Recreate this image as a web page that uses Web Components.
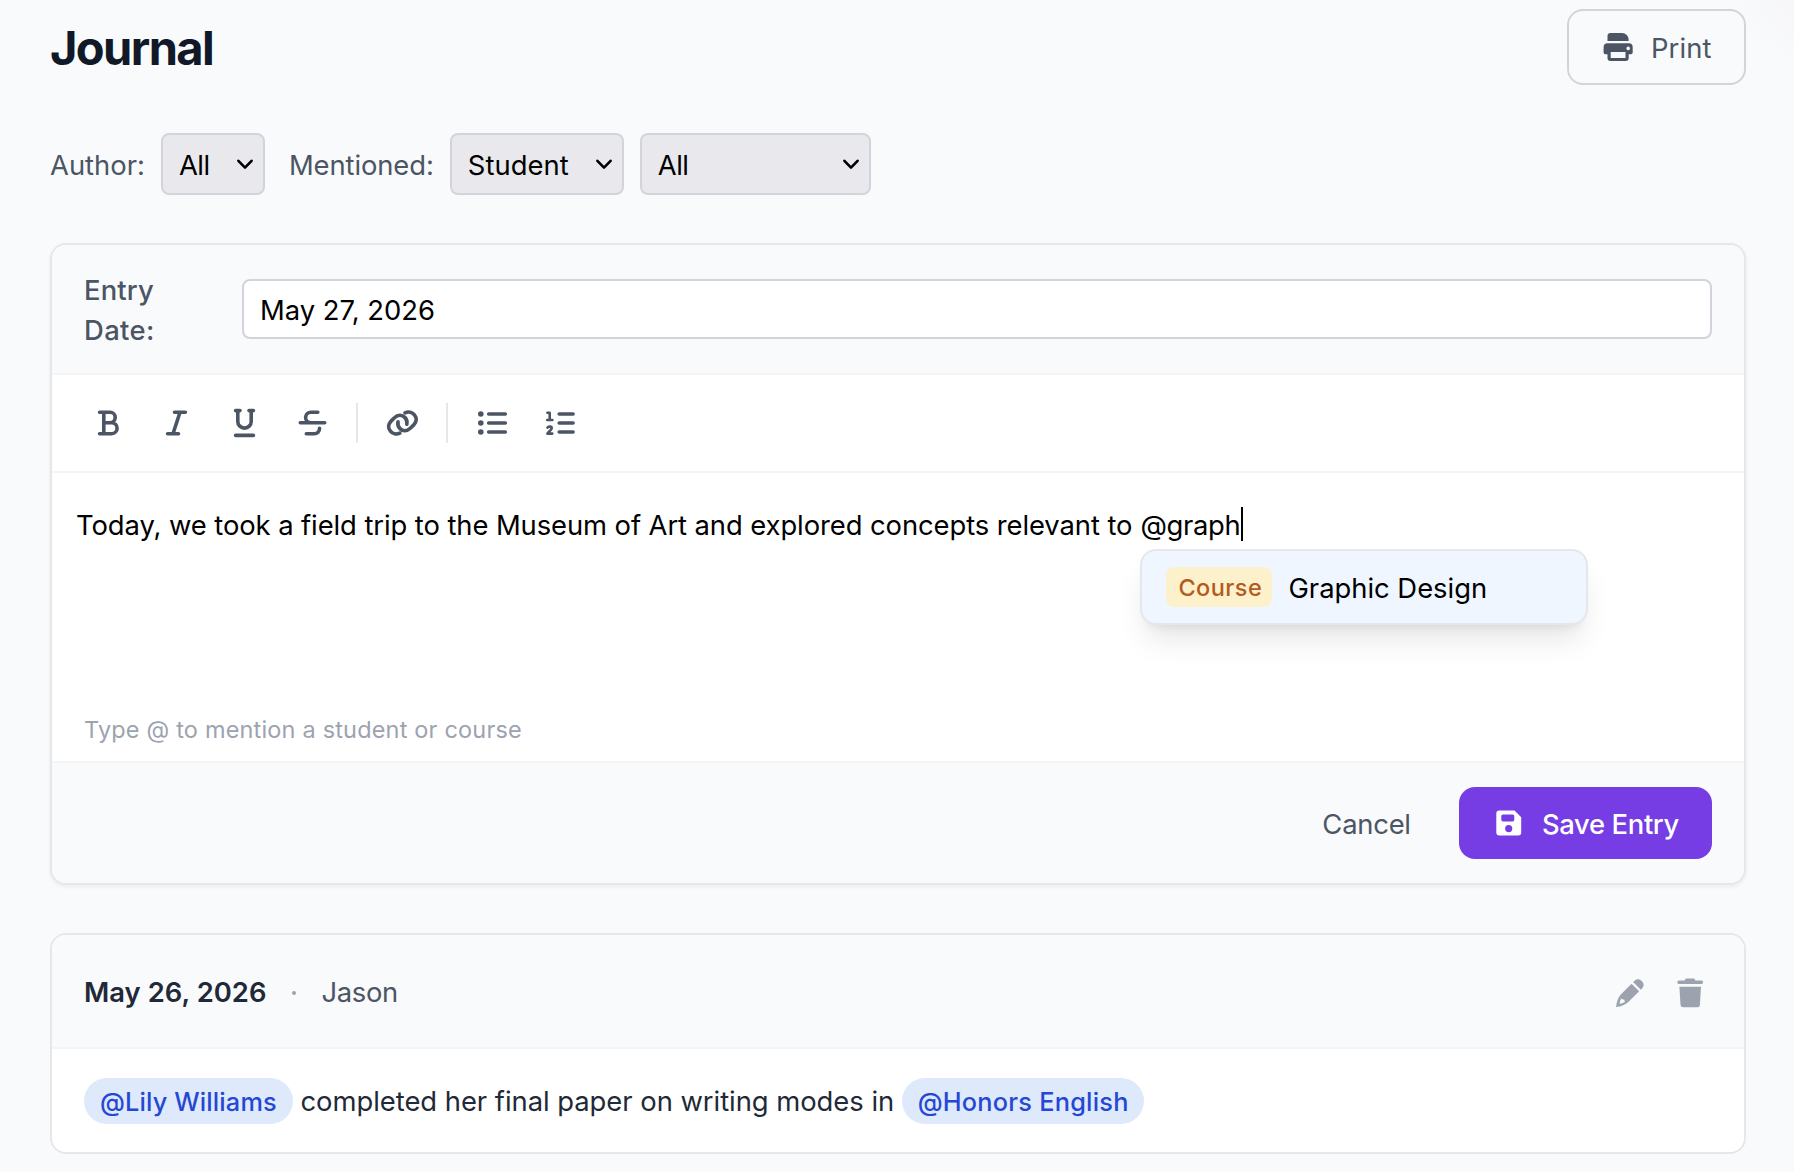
<!DOCTYPE html>
<html lang="en">
<head>
<meta charset="utf-8">
<title>Journal</title>
<style>
    html{
        height: 100%;
    }

    body{
        margin: 0;
        min-height: 100%;
        overflow: hidden;
        background: radial-gradient(circle at 1850px -50px, #f5f5f8 0, #f6f6f9 70px, #f9fafc 130px) #f9fafc;
        font-family: Inter, "Liberation Sans", sans-serif;
        font-size: 27.4px;
        line-height: 40px;
        color: #000;
    }
</style>
</head>
<body>
<journal-page>
    <page-header slot="header">
        <text-run slot="title" width="161">Journal</text-run>
        <action-button kind="outline" icon="print"><text-run width="58.5">Print</text-run></action-button>
    </page-header>

    <filter-bar slot="filters">
        <text-run width="93">Author:</text-run>
        <select-box style="width: 104px"><text-run width="29.5">All</text-run></select-box>
        <text-run width="141" style="margin-left: 8px">Mentioned:</text-run>
        <select-box style="width: 174px"><text-run width="100">Student</text-run></select-box>
        <select-box style="width: 231px"><text-run width="29.5">All</text-run></select-box>
    </filter-bar>

    <entry-card raised>
        <date-field slot="header">
            <text-run slot="label" width="68">Entry</text-run>
            <text-run slot="label" width="67">Date:</text-run>
            <text-run width="172">May 27, 2026</text-run>
        </date-field>
        <format-toolbar></format-toolbar>
        <text-editor>
            <text-run width="1055">Today, we took a field trip to the Museum of Art and explored concepts relevant to</text-run>
            <text-run slot="query" width="98">@graph</text-run>
            <mention-menu slot="menu">
                <text-run slot="type" width="81.5">Course</text-run>
                <text-run width="196.5">Graphic Design</text-run>
            </mention-menu>
            <text-run slot="hint" width="436">Type @ to mention a student or course</text-run>
        </text-editor>
        <card-footer slot="footer">
            <action-button kind="plain"><text-run width="86">Cancel</text-run></action-button>
            <action-button kind="primary" icon="save"><text-run width="136.5">Save Entry</text-run></action-button>
        </card-footer>
    </entry-card>

    <entry-card>
        <entry-meta slot="header">
            <text-run slot="date" width="180.5">May 26, 2026</text-run>
            <text-run slot="author" width="74.5">Jason</text-run>
        </entry-meta>
        <entry-body>
            <mention-pill style="width: 209px"><text-run width="175">@Lily Williams</text-run></mention-pill>
            <text-run width="591.5">completed her final paper on writing modes in</text-run>
            <mention-pill style="width: 242px"><text-run width="208.5">@Honors English</text-run></mention-pill>
        </entry-body>
    </entry-card>
</journal-page>

<script>
const icons = {
    bold: `<g class="line"><path d="M7.6 5.3H18a5.2 5.2 0 0 1 0 10.4h-6.2M18 15.7h1.6a5.5 5.5 0 0 1 0 11h-12M11.8 5.3v21.4"/></g>`,
    italic: `<g class="line"><path d="M14.5 5.3h10.9M7.6 26.7h10.9M20 5.3l-7 21.4"/></g>`,
    underline: `<g class="line"><path d="M7.6 3.6H12M21 3.6h4.4M9.8 3.6v10.8a6.7 6.7 0 0 0 13.4 0V3.6M7.6 28.4h17.8"/></g>`,
    strike: `<g class="line"><path d="M21.8 5.3h-7a5.2 5.2 0 0 0-1 10.3M4.3 15.8h24.4M10.3 26.7h8.2a5 5 0 0 0 5-5v-.4"/></g>`,
    list: `<circle cx="4.8" cy="7" r="2.8"/><circle cx="4.8" cy="16" r="2.8"/><circle cx="4.8" cy="25" r="2.8"/>
        <g class="line"><path d="M12.7 7h16.6M12.7 16h16.6M12.7 25h16.6"/></g>`,
    ordered: `<g class="line"><path d="M15.2 7h13.9M15.2 16h13.9M15.2 25h13.9"/></g>
        <g class="line thin"><path d="M3.4 5.8h2.3v7M3.2 13h5.2M3.5 20.6c.8-1.4 4.3-1.3 4.2.6 0 1.6-3 3.4-4.3 5.4h4.9"/></g>`,
    link: `<g class="line" style="stroke-width: 3.7">
        <path d="M13.8 26.2C10.5 27.8 6.5 26.8 4.4 24.2 1.8 21 2.2 17.2 4.8 14.4L8.2 11C11.8 7.6 16.2 7.7 18.8 10.4 20.6 12.2 21.3 14.6 20.8 17.2"/>
        <path transform="rotate(180 16.4 16)" d="M13.8 26.2C10.5 27.8 6.5 26.8 4.4 24.2 1.8 21 2.2 17.2 4.8 14.4L8.2 11C11.8 7.6 16.2 7.7 18.8 10.4 20.6 12.2 21.3 14.6 20.8 17.2"/></g>`,
    print: `<path d="M5.5 10V5a3 3 0 0 1 3-3h11.7c3.4 0 6.4 3 6.4 6.4V10z"/>
        <path fill-rule="evenodd" d="M5.5 12.2h21.2a4 4 0 0 1 4 4v5.3a1.7 1.7 0 0 1-1.7 1.7h-2.3V27a3 3 0 0 1-3 3H8.5a3 3 0 0 1-3-3v-3.8H3.3a1.7 1.7 0 0 1-1.7-1.7v-5.3a4 4 0 0 1 3.9-4zM8.7 21v6h14.8v-6zM26.2 15.6a1.8 1.8 0 1 0 0 3.6 1.8 1.8 0 0 0 0-3.6z"/>`,
    save: `<path fill-rule="evenodd" d="M6.3 3.6h15.2l6.7 6.6v15.3a3 3 0 0 1-3 3H6.3a3 3 0 0 1-3-3V6.6a3 3 0 0 1 3-3zM10 7.4a1.7 1.7 0 0 0-1.7 1.7v3.6a1.7 1.7 0 0 0 1.7 1.7h9.6a1.7 1.7 0 0 0 1.7-1.7V9.1a1.7 1.7 0 0 0-1.7-1.7zM15.7 18a3.6 3.6 0 1 0 0 7.2 3.6 3.6 0 0 0 0-7.2z"/>`,
    pencil: `<path d="M20 4.3c2.3-2.7 5.3-2.7 7.8-.3s2.4 5.4.1 7.7l-1.1 1.1-7.7-7.7z"/>
        <path fill-rule="evenodd" d="M17.5 6.8l7.7 7.5L14.3 24.9C11.5 27.6 7.5 29.3 2 30 2.7 24.5 4.1 20.4 6.8 17.5zM7.2 21.5c-.7 1.2-1.3 3.2-1.6 5.2 2-.3 4-.9 5.3-1.7l-.6-2.3-2.1-.4z"/>`,
    trash: `<path d="M12.8 1.4h6.4a2 2 0 0 1 2 2h6.2a1.7 1.7 0 0 1 0 3.5H5a1.7 1.7 0 0 1 0-3.5h5.8a2 2 0 0 1 2-2z"/>
        <path d="M5.4 9.7H27l-1.1 18.2a2.5 2.5 0 0 1-2.5 2.3H9a2.5 2.5 0 0 1-2.5-2.3z"/>`,
    chevron: `<g class="line thin"><path d="M9.4 12.8l6.6 6.8 6.6-6.8"/></g>`
};

// each component only needs a block of markup, so they all share this base
class BaseElement extends HTMLElement{
    constructor(){
        super();
        this.attachShadow({mode: "open"});
        const template = document.createElement("template");
        template.innerHTML = this.constructor.markup;
        this.shadowRoot.appendChild(template.content.cloneNode(true));
    }
}

class AppIcon extends BaseElement{
    static markup = `
        <style>
            :host{ display: block; width: 32px; height: 32px; flex: none; }
            svg{ display: block; width: 100%; height: 100%; fill: currentColor; overflow: visible; }
            .line{ fill: none; stroke: currentColor; stroke-width: 3.6; stroke-linecap: round; stroke-linejoin: round; }
            .thin{ stroke-width: 2.6; }
        </style>
        <svg viewBox="0 0 32 32" aria-hidden="true"></svg>
    `;

    connectedCallback(){
        this.shadowRoot.querySelector("svg").innerHTML = icons[this.getAttribute("name")] || "";
    }
}

// one line of text, tracked so that its ink is as wide as the width attribute says
class TextRun extends BaseElement{
    static markup = `
        <style>
            :host{
                display: block;
                flex: none;
                padding-top: var(--drop, 0px);
                margin-bottom: calc(var(--drop, 0px) * -1);
                white-space: nowrap;
            }
        </style>
        <slot></slot>
    `;

    connectedCallback(){
        requestAnimationFrame(() => this.fit());
        this.fit();
    }

    fit(){
        const target = parseFloat(this.getAttribute("width"));
        const text = this.textContent;
        if(!target || text.length < 2) return;

        const style = getComputedStyle(this);
        const ctx = document.createElement("canvas").getContext("2d");
        ctx.font = `${style.fontWeight} ${style.fontSize} ${style.fontFamily}`;
        const box = ctx.measureText(text);
        const ink = box.actualBoundingBoxLeft + box.actualBoundingBoxRight;
        const spacing = (target - ink) / (text.length - 1);
        this.style.letterSpacing = `${spacing.toFixed(3)}px`;
        this.style.marginRight = `${(-spacing).toFixed(3)}px`;
    }
}

class JournalPage extends BaseElement{
    static markup = `
        <style>
            :host{ display: flex; flex-direction: column; padding: 9px 48px 18px 50px; }
            main{ display: flex; flex-direction: column; gap: 48px; margin-top: 48px; }
        </style>
        <slot name="header"></slot>
        <slot name="filters"></slot>
        <main><slot></slot></main>
    `;
}

class PageHeader extends BaseElement{
    static markup = `
        <style>
            :host{ display: flex; justify-content: space-between; align-items: center; height: 76px; }
            h1{
                margin: 0;
                font-size: 47px;
                line-height: 76px;
                font-weight: 700;
                color: #111827;
                --drop: 1px;
            }
        </style>
        <h1><slot name="title"></slot></h1>
        <slot></slot>
    `;
}

class ActionButton extends BaseElement{
    static markup = `
        <style>
            :host{ display: block; --drop: 1px; }
            button{
                display: flex;
                align-items: center;
                box-sizing: border-box;
                height: 72px;
                padding: 0 32px;
                border: 0;
                border-radius: 16px;
                background: none;
                font: inherit;
                color: #4b5563;
            }
            app-icon{ display: none; }
            :host([icon]) app-icon{ display: block; }
            :host([kind="outline"]) button{
                width: 179px;
                height: 76px;
                padding: 0 0 0 33px;
                gap: 17px;
                border: 2px solid #d1d5db;
            }
            :host([kind="primary"]) button{
                width: 253px;
                padding: 0 0 0 34px;
                gap: 17px;
                background: #763de4;
                color: #fff;
                font-weight: 500;
            }
        </style>
        <button><app-icon></app-icon><slot></slot></button>
    `;

    connectedCallback(){
        const icon = this.shadowRoot.querySelector("app-icon");
        icon.setAttribute("name", this.getAttribute("icon") || "");
        if(icon.connectedCallback) icon.connectedCallback();
    }
}

class FilterBar extends BaseElement{
    static markup = `
        <style>
            :host{ display: flex; align-items: center; gap: 16px; margin-top: 48px; color: #4b5563; --drop: 1px; }
        </style>
        <slot></slot>
    `;
}

class SelectBox extends BaseElement{
    static markup = `
        <style>
            :host{
                display: flex;
                align-items: center;
                justify-content: space-between;
                box-sizing: border-box;
                height: 62px;
                padding: 0 2px 0 16px;
                border: 2px solid #d1d5db;
                border-radius: 8px;
                background: #e9e8ed;
                color: #000;
            }
        </style>
        <slot></slot>
        <app-icon name="chevron"></app-icon>
    `;
}

class EntryCard extends BaseElement{
    static markup = `
        <style>
            :host{
                display: block;
                border: 2px solid #e5e7eb;
                border-radius: 16px;
                background: #fff;
            }
            :host([raised]){ box-shadow: 0 2px 4px rgba(0, 0, 0, .06); }
            header{ background: #f9fafc; border-bottom: 2px solid #f3f4f6; border-radius: 14px 14px 0 0; }
            footer{ background: #f9fafc; border-radius: 0 0 14px 14px; }
        </style>
        <header><slot name="header"></slot></header>
        <slot></slot>
        <footer><slot name="footer"></slot></footer>
    `;
}

class DateField extends BaseElement{
    static markup = `
        <style>
            :host{ display: flex; align-items: center; padding: 24px 32px; }
            label{ display: flex; flex-direction: column; width: 158px; font-weight: 500; color: #4b5563; --drop: 1px; }
            .input{
                flex: 1;
                display: flex;
                align-items: center;
                box-sizing: border-box;
                height: 60px;
                padding: 2px 16px 0;
                border: 2px solid #d1d5db;
                border-radius: 8px;
                background: #fff;
            }
        </style>
        <label><slot name="label"></slot></label>
        <div class="input"><slot></slot></div>
    `;
}

class FormatToolbar extends BaseElement{
    static markup = `
        <style>
            :host{
                display: flex;
                align-items: center;
                gap: 8px;
                height: 96px;
                padding: 0 26px;
                border-bottom: 2px solid #f3f4f6;
                color: #4b5563;
            }
            button{
                display: grid;
                place-items: center;
                width: 60px;
                height: 60px;
                padding: 0;
                border: 0;
                background: none;
                color: inherit;
            }
            i{ width: 2px; height: 40px; margin: 0 6px; background: #e5e7eb; }
        </style>
        <button><app-icon name="bold"></app-icon></button>
        <button><app-icon name="italic"></app-icon></button>
        <button><app-icon name="underline"></app-icon></button>
        <button><app-icon name="strike"></app-icon></button>
        <i></i>
        <button><app-icon name="link"></app-icon></button>
        <i></i>
        <button><app-icon name="list"></app-icon></button>
        <button><app-icon name="ordered"></app-icon></button>
    `;
}

class TextEditor extends BaseElement{
    static markup = `
        <style>
            :host{
                display: flex;
                flex-direction: column;
                justify-content: space-between;
                box-sizing: border-box;
                height: 290px;
                padding: 32px 24px 16px;
                border-bottom: 2px solid #f3f4f6;
            }
            .line{ display: flex; align-items: center; height: 40px; }
            .query{ position: relative; display: flex; align-items: center; height: 40px; margin-left: 8px; }
            .caret{ width: 2px; height: 34px; margin-top: -2px; background: #000; }
            .menu{ position: absolute; top: 44px; left: 0; }
            .hint{ padding-left: 8px; font-size: 23.5px; line-height: 32px; color: #9ca3af; --drop: 1px; }
        </style>
        <div class="line">
            <slot></slot>
            <div class="query">
                <slot name="query"></slot>
                <div class="caret"></div>
                <div class="menu"><slot name="menu"></slot></div>
            </div>
        </div>
        <div class="hint"><slot name="hint"></slot></div>
    `;
}

class MentionMenu extends BaseElement{
    static markup = `
        <style>
            :host{
                display: flex;
                align-items: center;
                gap: 16px;
                box-sizing: border-box;
                width: 448px;
                height: 76px;
                padding: 0 24px;
                border: 2px solid #e5e7eb;
                border-radius: 16px;
                background: #eff6ff;
                box-shadow: 0 20px 30px -6px rgba(0, 0, 0, .1), 0 8px 12px -8px rgba(0, 0, 0, .1);
                --drop: 1px;
            }
            .type{
                box-sizing: border-box;
                width: 106px;
                height: 40px;
                padding-left: 12px;
                border-radius: 8px;
                background: #fdf1cb;
                color: #b45a1f;
                font-size: 23.5px;
                font-weight: 500;
            }
        </style>
        <div class="type"><slot name="type"></slot></div>
        <slot></slot>
    `;
}

class CardFooter extends BaseElement{
    static markup = `
        <style>
            :host{ display: flex; justify-content: flex-end; align-items: center; gap: 16px; height: 120px; padding: 0 32px; }
        </style>
        <slot></slot>
    `;
}

class EntryMeta extends BaseElement{
    static markup = `
        <style>
            :host{
                display: flex;
                align-items: center;
                box-sizing: border-box;
                height: 112px;
                padding: 4px 38px 0 32px;
                color: #4b5563;
                --drop: -1px;
            }
            .date{ margin-top: -2px; font-weight: 600; color: #1f2937; }
            .author{ margin-top: -2px; }
            .dot{ width: 4px; height: 4px; margin: 0 25px 0 26px; border-radius: 50%; background: #9ca3af; }
            .tools{ display: flex; gap: 28px; margin-left: auto; color: #9ca3af; }
        </style>
        <div class="date"><slot name="date"></slot></div>
        <div class="dot"></div>
        <div class="author"><slot name="author"></slot></div>
        <div class="tools">
            <app-icon name="pencil"></app-icon>
            <app-icon name="trash"></app-icon>
        </div>
    `;
}

class EntryBody extends BaseElement{
    static markup = `
        <style>
            :host{ display: flex; align-items: center; gap: 7.5px; height: 103px; padding: 0 32px; color: #1f2937; }
        </style>
        <slot></slot>
    `;
}

class MentionPill extends BaseElement{
    static markup = `
        <style>
            :host{
                display: block;
                box-sizing: border-box;
                height: 46px;
                padding-left: 16px;
                border-radius: 23px;
                background: #dee9fc;
                color: #2548d4;
                font-size: 25.3px;
                line-height: 47px;
                font-weight: 500;
            }
        </style>
        <slot></slot>
    `;
}

customElements.define('app-icon', AppIcon);
customElements.define('journal-page', JournalPage);
customElements.define('page-header', PageHeader);
customElements.define('action-button', ActionButton);
customElements.define('filter-bar', FilterBar);
customElements.define('select-box', SelectBox);
customElements.define('entry-card', EntryCard);
customElements.define('date-field', DateField);
customElements.define('format-toolbar', FormatToolbar);
customElements.define('text-editor', TextEditor);
customElements.define('mention-menu', MentionMenu);
customElements.define('card-footer', CardFooter);
customElements.define('entry-meta', EntryMeta);
customElements.define('entry-body', EntryBody);
customElements.define('mention-pill', MentionPill);
customElements.define('text-run', TextRun);
</script>
</body>
</html>
